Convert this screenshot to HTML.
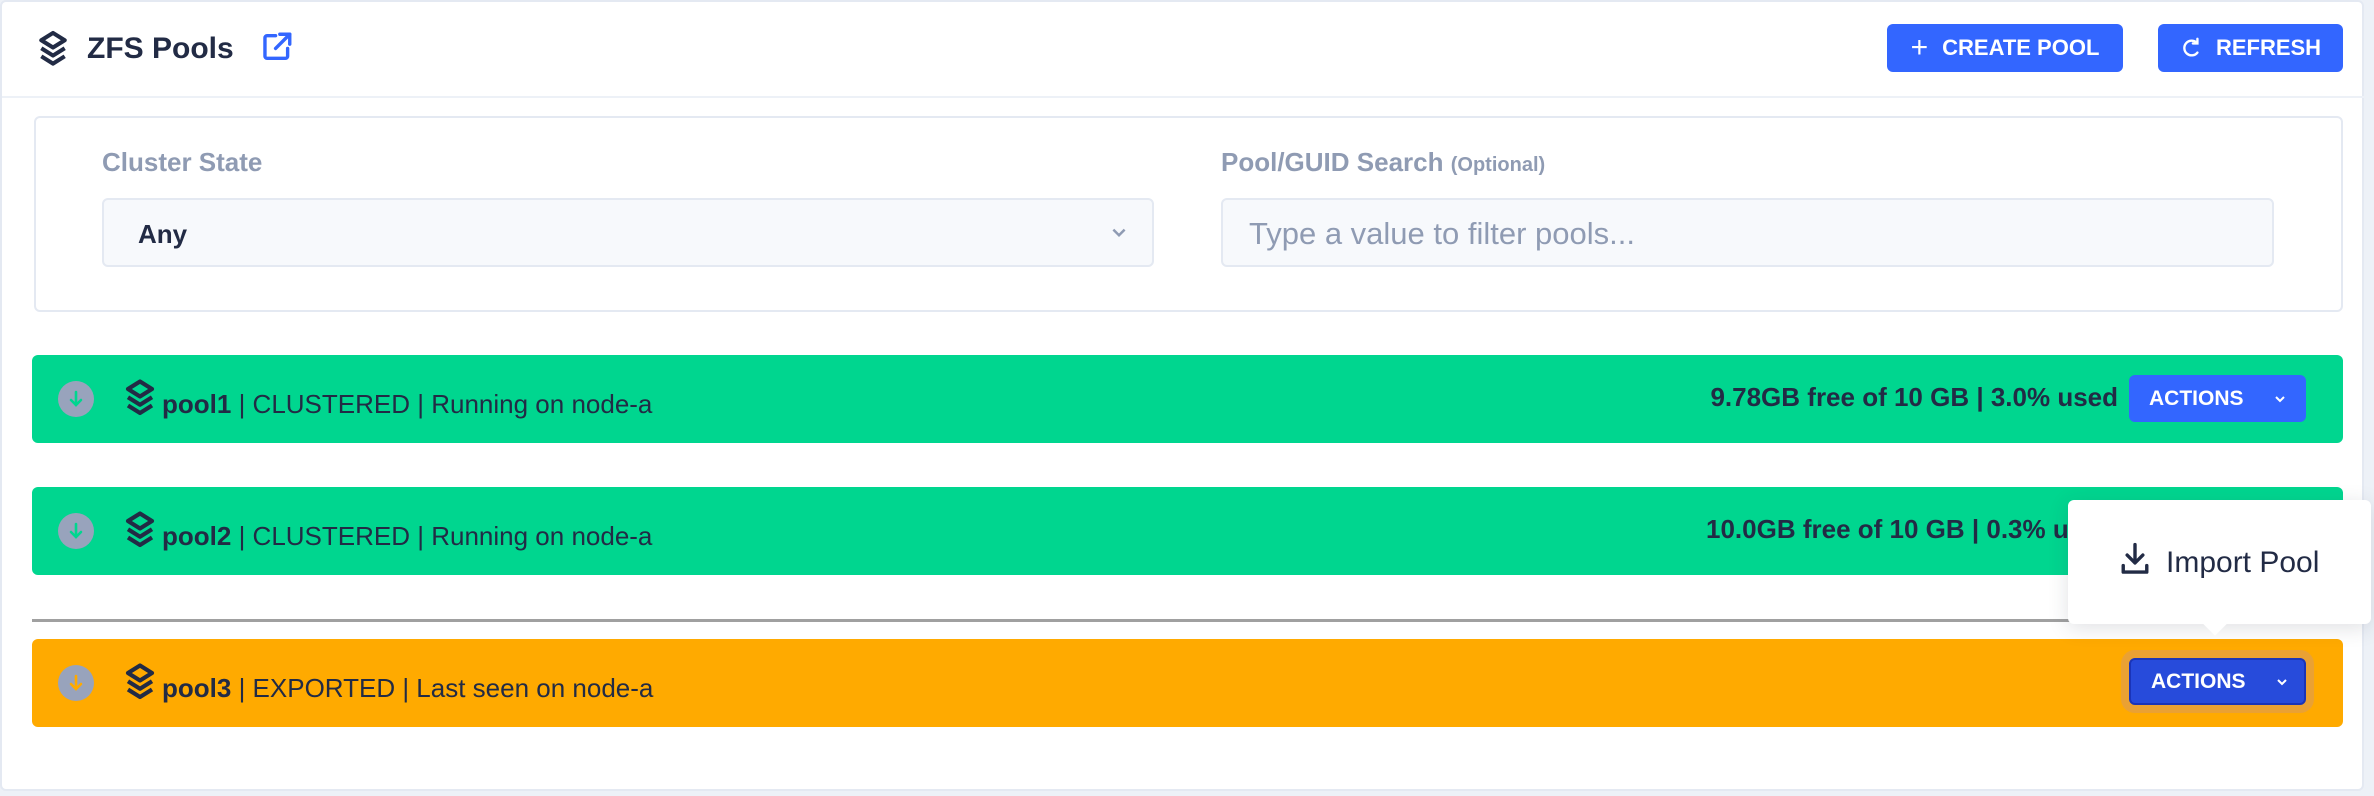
<!DOCTYPE html>
<html><head><meta charset="utf-8"><style>
*{box-sizing:border-box;margin:0;padding:0}
body{width:2374px;height:796px;background:#edf1f7;font-family:"Liberation Sans",Arial,sans-serif;color:#222b45;position:relative;overflow:hidden}
.card{position:absolute;left:0;top:0;width:2364px;height:791px;background:#fff;border:2px solid #e4e9f2;border-radius:6px}
.abs{position:absolute}
.hdiv{position:absolute;left:0;top:94px;width:2364px;height:2px;background:#edf1f7}
.title{left:85px;top:29px;font-size:30px;font-weight:bold;line-height:36px}
.btn{position:absolute;background:#3366ff;color:#fff;border-radius:6px;font-weight:bold;font-size:22px;display:flex;align-items:center;justify-content:center;gap:14px}
.filter{left:32px;top:114px;width:2309px;height:196px;border:2px solid #e4e9f2;border-radius:6px;background:#fff}
.lbl{font-size:26px;font-weight:bold;color:#8f9bb3}
.inp{position:absolute;background:#f7f9fc;border:2px solid #e4e9f2;border-radius:6px;height:69px}
.row{position:absolute;left:30px;width:2311px;height:88px;border-radius:6px}
.circ{position:absolute;left:58px;width:36px;height:36px;border-radius:50%;background:#98a3bc;display:flex;align-items:center;justify-content:center}
.rtxt{position:absolute;left:162px;font-size:26px;line-height:30px}
.right{position:absolute;font-size:26px;font-weight:bold;line-height:30px}
.act{position:absolute;left:2129px;width:177px;height:47px;background:#3366ff;color:#fff;border-radius:6px;font-weight:bold;font-size:21px;display:flex;align-items:center;padding-left:20px;gap:30px}
</style></head><body>
<div class="card">
 <svg class="abs" style="left:33px;top:28px" width="36" height="38" viewBox="0 0 24 26" fill="none" stroke="#222b45" stroke-width="2.8" stroke-linejoin="round"><path d="M12 2 L20 7 L12 12 L4 7 Z"/><path d="M4 12.5 L12 17.5 L20 12.5"/><path d="M4 18 L12 23 L20 18"/></svg>
 <div class="abs title">ZFS Pools</div>
 <svg class="abs" style="left:258px;top:28px" width="34" height="34" viewBox="0 0 24 24" fill="none" stroke="#3366ff" stroke-width="2.4" stroke-linecap="round" stroke-linejoin="round"><path d="M11 4H5a1.5 1.5 0 0 0-1.5 1.5v13A1.5 1.5 0 0 0 5 20h13a1.5 1.5 0 0 0 1.5-1.5V13"/><path d="M14 3h7v7"/><path d="M21 3 11 13"/></svg>
 <div class="btn" style="left:1885px;top:22px;width:236px;height:48px"><span style="font-size:30px;font-weight:normal;line-height:20px">+</span>CREATE POOL</div>
 <div class="btn" style="left:2156px;top:22px;width:185px;height:48px"><svg width="22" height="24" viewBox="0 0 24 24" fill="none" stroke="#fff" stroke-width="2.6" stroke-linecap="round"><path d="M18 6A8 8 0 1 0 19 17"/><path d="M19 2v5h-5"/></svg>REFRESH</div>
 <div class="hdiv"></div>
 <div class="abs filter"></div>
 <div class="abs lbl" style="left:100px;top:145px">Cluster State</div>
 <div class="inp" style="left:100px;top:196px;width:1052px"><span class="abs" style="left:34px;top:19px;font-size:26px;font-weight:bold">Any</span><svg class="abs" style="left:1006px;top:25px" width="18" height="16" viewBox="0 0 16 14" fill="none" stroke="#8f9bb3" stroke-width="2.2"><path d="M3 4l5 5 5-5"/></svg></div>
 <div class="abs lbl" style="left:1219px;top:145px">Pool/GUID Search <span style="font-size:20px">(Optional)</span></div>
 <div class="inp" style="left:1219px;top:196px;width:1053px"><span class="abs" style="left:26px;top:16px;font-size:31px;color:#8f9bb3">Type a value to filter pools...</span></div>

 <div class="row" style="top:353px;background:#00d68f"></div>
 <div class="row" style="top:485px;background:#00d68f"></div>
 <div class="abs" style="left:30px;top:617px;width:2311px;height:3px;background:#a0a0a0"></div>
 <div class="row" style="top:637px;background:#ffaa00"></div>
</div>

<div class="circ" style="top:381px"><svg width="18" height="20" viewBox="0 0 18 20" fill="none" stroke="#00d68f" stroke-width="2.6" stroke-linecap="round"><path d="M9 3v13M4 11l5 5 5-5"/></svg></div>
<svg class="abs" style="left:122px;top:378px" width="36" height="40" viewBox="0 0 24 26" fill="none" stroke="#222b45" stroke-width="2.8" stroke-linejoin="round"><path d="M12 2 L20 7 L12 12 L4 7 Z"/><path d="M4 12.5 L12 17.5 L20 12.5"/><path d="M4 18 L12 23 L20 18"/></svg>
<div class="rtxt" style="top:389px"><b>pool1</b> | CLUSTERED | Running on node-a</div>
<div class="right" style="top:382px;right:256px">9.78GB free of 10 GB | 3.0% used</div>
<div class="act" style="top:375px">ACTIONS <svg width="12" height="10" viewBox="0 0 12 10" fill="none" stroke="#fff" stroke-width="2"><path d="M2 3l4 4 4-4"/></svg></div>

<div class="circ" style="top:513px"><svg width="18" height="20" viewBox="0 0 18 20" fill="none" stroke="#00d68f" stroke-width="2.6" stroke-linecap="round"><path d="M9 3v13M4 11l5 5 5-5"/></svg></div>
<svg class="abs" style="left:122px;top:510px" width="36" height="40" viewBox="0 0 24 26" fill="none" stroke="#222b45" stroke-width="2.8" stroke-linejoin="round"><path d="M12 2 L20 7 L12 12 L4 7 Z"/><path d="M4 12.5 L12 17.5 L20 12.5"/><path d="M4 18 L12 23 L20 18"/></svg>
<div class="rtxt" style="top:521px"><b>pool2</b> | CLUSTERED | Running on node-a</div>
<div class="right" style="top:514px;left:1706px">10.0GB free of 10 GB | 0.3% used</div>

<div class="circ" style="top:665px"><svg width="18" height="20" viewBox="0 0 18 20" fill="none" stroke="#ffaa00" stroke-width="2.6" stroke-linecap="round"><path d="M9 3v13M4 11l5 5 5-5"/></svg></div>
<svg class="abs" style="left:122px;top:662px" width="36" height="40" viewBox="0 0 24 26" fill="none" stroke="#222b45" stroke-width="2.8" stroke-linejoin="round"><path d="M12 2 L20 7 L12 12 L4 7 Z"/><path d="M4 12.5 L12 17.5 L20 12.5"/><path d="M4 18 L12 23 L20 18"/></svg>
<div class="rtxt" style="top:673px"><b>pool3</b> | EXPORTED | Last seen on node-a</div>
<div class="act" style="top:658px;background:#274bdb;border:2px solid #1a34b8;box-shadow:0 0 0 8px rgba(230,160,60,.85)">ACTIONS <svg width="12" height="10" viewBox="0 0 12 10" fill="none" stroke="#fff" stroke-width="2"><path d="M2 3l4 4 4-4"/></svg></div>

<div class="abs" style="left:2068px;top:500px;width:303px;height:124px;background:#fff;border-radius:6px;box-shadow:0 4px 20px rgba(44,51,73,.15)"></div>
<div class="abs" style="left:2206px;top:614px;width:18px;height:18px;background:#fff;transform:rotate(45deg)"></div>
<svg class="abs" style="left:2119px;top:542px" width="32" height="34" viewBox="0 0 24 26" fill="none" stroke="#222b45" stroke-width="2.6" stroke-linecap="round" stroke-linejoin="round"><path d="M12 2v14M6 10l6 6 6-6"/><path d="M3 18v5h18v-5"/></svg>
<div class="abs" style="left:2166px;top:546px;font-size:30px;line-height:34px">Import Pool</div>
</body></html>
